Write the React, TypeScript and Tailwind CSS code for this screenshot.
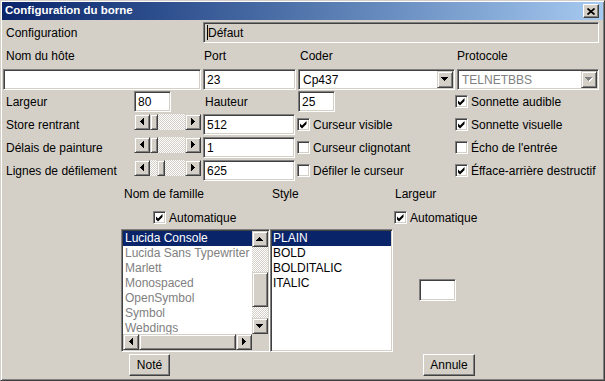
import React from 'react'

const sunken =
  'border border-t-[#808080] border-l-[#808080] border-b-white border-r-white shadow-[inset_1px_1px_0_#404040,inset_-1px_-1px_0_#d4d0c8]'
const raised =
  'border border-t-[#d4d0c8] border-l-[#d4d0c8] border-b-[#404040] border-r-[#404040] shadow-[inset_1px_1px_0_#ffffff,inset_-1px_-1px_0_#808080] bg-[#d4d0c8]'
const button =
  'border border-t-white border-l-white border-b-[#404040] border-r-[#404040] shadow-[inset_-1px_-1px_0_#808080] bg-[#d4d0c8]'
const dither =
  'bg-[image:repeating-conic-gradient(#ffffff_0%_25%,#d4d0c8_0%_50%)] bg-[length:2px_2px]'

type Dir = 'left' | 'right' | 'up' | 'down'

function Tri({ dir, disabled }: { dir: Dir; disabled?: boolean }) {
  const horiz = dir === 'left' || dir === 'right'
  const w = horiz ? 4 : 7
  const h = horiz ? 7 : 4
  const pts = {
    left: '4,0 4,7 0,3.5',
    right: '0,0 0,7 4,3.5',
    up: '0,4 7,4 3.5,0',
    down: '0,0 7,0 3.5,4',
  }[dir]
  return (
    <svg width={w + 1} height={h + 1} viewBox={`0 0 ${w + 1} ${h + 1}`} shapeRendering="crispEdges">
      {disabled && <polygon points={pts} fill="#ffffff" transform="translate(1,1)" />}
      <polygon points={pts} fill={disabled ? '#808080' : '#000000'} />
    </svg>
  )
}

function ArrowBtn({ dir }: { dir: Dir }) {
  return (
    <div className={`w-[16px] h-[16px] shrink-0 flex items-center justify-center ${raised}`}>
      <Tri dir={dir} />
    </div>
  )
}

function Slider({ thumb }: { thumb: number }) {
  return (
    <div className="flex w-[67px] h-[16px] self-start">
      <ArrowBtn dir="left" />
      <div className={`flex-1 flex ${dither}`}>
        <div style={{ width: thumb }} />
        <div className={`w-[8px] h-full ${raised}`} />
      </div>
      <ArrowBtn dir="right" />
    </div>
  )
}

function Field({ value, className = '' }: { value: string; className?: string }) {
  return (
    <div className={`h-[21px] bg-white pl-[3px] flex items-center ${sunken} ${className}`}>
      {value}
    </div>
  )
}

function Check({ checked, label, className = '' }: { checked?: boolean; label: string; className?: string }) {
  return (
    <div className={`flex items-center gap-[3px] ${className}`}>
      <div className={`w-[13px] h-[13px] shrink-0 bg-white ${sunken}`}>
        {checked && (
          <svg width="11" height="11" viewBox="0 0 11 11">
            <polygon points="2,4.5 4,6.5 8.5,2 8.5,5 4,9.5 2,7.5" fill="#000" />
          </svg>
        )}
      </div>
      <span className="whitespace-nowrap">{label}</span>
    </div>
  )
}

function Combo({ value, disabled }: { value: string; disabled?: boolean }) {
  return (
    <div className={`h-[21px] bg-white p-[1px] flex ${sunken}`}>
      <div className={`flex-1 flex items-center pl-[3px] ${disabled ? 'text-[#808080]' : ''}`}>{value}</div>
      <div className={`w-[16px] h-full flex items-center justify-center ${raised}`}>
        <Tri dir="down" disabled={disabled} />
      </div>
    </div>
  )
}

const families = [
  'Lucida Console',
  'Lucida Sans Typewriter',
  'Marlett',
  'Monospaced',
  'OpenSymbol',
  'Symbol',
  'Webdings',
]
const styles = ['PLAIN', 'BOLD', 'BOLDITALIC', 'ITALIC']

export default function App() {
  return (
    <div className="w-[605px] h-[381px] bg-[#d4d0c8] p-[1px] border border-t-[#d4d0c8] border-l-[#d4d0c8] border-b-[#404040] border-r-[#404040] shadow-[inset_1px_1px_0_#ffffff,inset_-1px_-1px_0_#808080] font-['Liberation_Sans',Arial,sans-serif] text-[12px] text-black flex flex-col overflow-hidden">
      {/* Title bar */}
      <div className="h-[18px] shrink-0 flex items-center justify-between pl-[3px] pr-[4px] bg-linear-to-r from-[#0a246a] to-[#a6caf0]">
        <span className="text-white font-bold text-[11.5px]">Configuration du borne</span>
        <div className={`w-[16px] h-[14px] flex items-center justify-center ${button}`}>
          <svg width="8" height="7" viewBox="0 0 8 7">
            <path d="M0.5 0.5 L7.5 6.5 M7.5 0.5 L0.5 6.5" stroke="#000" strokeWidth="1.7" />
          </svg>
        </div>
      </div>

      {/* Connection settings */}
      <div className="mt-[2px] ml-[1px] grid grid-cols-[129px_67px_93px_157px_142px] grid-rows-[21px_22px_20px_21px_21px_21px_21px] gap-x-[2px] gap-y-[2px]">
        <div className="col-span-2 pl-[3px] flex items-center">Configuration</div>
        <div className={`col-span-3 pl-[3px] flex items-center ${sunken}`}>
          <span className="w-[1px] h-[15px] bg-black" />
          Défaut
        </div>

        <div className="col-span-2 pl-[3px] flex items-center">Nom du hôte</div>
        <div className="pl-[1px] flex items-center">Port</div>
        <div className="pl-[2px] flex items-center">Coder</div>
        <div className="flex items-center">Protocole</div>

        <Field value="" className="col-span-2" />
        <Field value="23" />
        <Combo value="Cp437" />
        <Combo value="TELNETBBS" disabled />

        <div className="pl-[3px] flex items-center">Largeur</div>
        <Field value="80" className="w-[37px]" />
        <div className="pl-[2px] flex items-center">Hauteur</div>
        <Field value="25" className="w-[37px]" />
        <Check checked label="Sonnette audible" className="-ml-[2px]" />

        <div className="pl-[3px] flex items-center">Store rentrant</div>
        <Slider thumb={0} />
        <Field value="512" className="w-[92px]" />
        <Check checked label="Curseur visible" className="-ml-[1px]" />
        <Check checked label="Sonnette visuelle" className="-ml-[2px]" />

        <div className="pl-[3px] flex items-center">Délais de painture</div>
        <Slider thumb={0} />
        <Field value="1" className="w-[92px]" />
        <Check label="Curseur clignotant" className="-ml-[1px]" />
        <Check label="Écho de l'entrée" className="-ml-[2px]" />

        <div className="pl-[3px] flex items-center whitespace-nowrap">Lignes de défilement</div>
        <Slider thumb={7} />
        <Field value="625" className="w-[92px]" />
        <Check label="Défiler le curseur" className="-ml-[1px]" />
        <Check checked label="Éfface-arrière destructif" className="-ml-[2px]" />
      </div>

      {/* Font settings */}
      <div className="flex ml-[119px] mt-[6px]">
        <div className="w-[149px] flex flex-col">
          <div className="h-[14px] leading-[14px] pl-[3px]">Nom de famille</div>
          <Check checked label="Automatique" className="mt-[10px] h-[13px] pl-[32px]" />
          <div className={`mt-[5px] w-[149px] h-[123px] bg-white p-[1px] flex flex-col ${sunken}`}>
            <div className="flex flex-1 min-h-0">
              <div className="flex-1 overflow-hidden">
                {families.map((f, i) => (
                  <div
                    key={f}
                    className={`h-[15px] leading-[15px] pl-[2px] whitespace-nowrap ${
                      i === 0 ? 'bg-[#0a246a] text-white' : 'text-[#808080]'
                    }`}
                  >
                    {f}
                  </div>
                ))}
              </div>
              <div className="w-[16px] flex flex-col">
                <ArrowBtn dir="up" />
                <div className={`h-[25px] ${dither}`} />
                <div className={`h-[35px] ${raised}`} />
                <div className={`flex-1 ${dither}`} />
                <ArrowBtn dir="down" />
              </div>
            </div>
            <div className="flex h-[16px]">
              <ArrowBtn dir="left" />
              <div className={`flex-1 ${raised}`} />
              <ArrowBtn dir="right" />
              <div className="w-[16px] bg-[#d4d0c8]" />
            </div>
          </div>
        </div>

        <div className="w-[123px] flex flex-col">
          <div className="h-[14px] leading-[14px] pl-[2px]">Style</div>
          <div className="mt-[10px] h-[13px]" />
          <div className={`mt-[5px] w-[123px] h-[123px] bg-white p-[1px] ${sunken}`}>
            {styles.map((s, i) => (
              <div
                key={s}
                className={`h-[15px] leading-[15px] pl-[1px] ${i === 0 ? 'bg-[#0a246a] text-white' : ''}`}
              >
                {s}
              </div>
            ))}
          </div>
        </div>

        <div className="flex flex-col">
          <div className="h-[14px] leading-[14px] pl-[2px]">Largeur</div>
          <Check checked label="Automatique" className="mt-[10px] h-[13px] pl-[1px]" />
          <Field value="" className="mt-[55px] ml-[26px] w-[37px] h-[22px]" />
        </div>
      </div>

      {/* Buttons */}
      <div className="flex ml-[127px] mt-[2px]">
        <div className={`w-[41px] h-[22px] flex items-center justify-center ${button}`}>Noté</div>
        <div className={`ml-[253px] w-[52px] h-[22px] flex items-center justify-center ${button}`}>Annule</div>
      </div>
    </div>
  )
}
